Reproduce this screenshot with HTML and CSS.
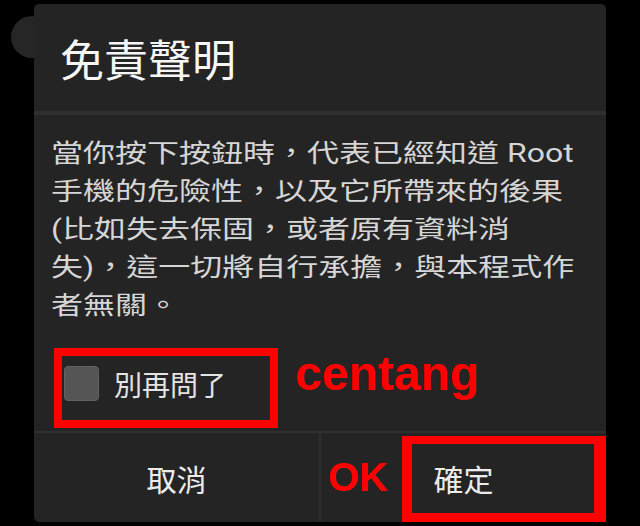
FILE: index.html
```html
<!DOCTYPE html>
<html lang="zh-Hant">
<head>
    <meta charset="UTF-8">
    <meta name="viewport" content="width=device-width, initial-scale=1.0">
    <title>免責聲明</title>
    <link rel="stylesheet" href="styles.css">
</head>
<body>
    <div class="screen">
        <div class="behind-dot"></div>

        <div class="dialog">
            <div class="dialog-title">免責聲明</div>
            <div class="title-rule"></div>

            <div class="dialog-body">
                <p class="message">當你按下按鈕時，代表已經知道 Root 手機的危險性，以及它所帶來的後果(比如失去保固，或者原有資料消失)，這一切將自行承擔，與本程式作者無關。</p>
            </div>

            <label class="check-row">
                <span class="check-box"></span>
                <span class="check-label">別再問了</span>
            </label>

            <div class="buttons">
                <button class="btn">取消</button>
                <button class="btn btn-ok">確定</button>
            </div>
        </div>

        <!-- annotations drawn on top of the screenshot -->
        <div class="mark mark-check"></div>
        <div class="mark mark-ok"></div>
        <span class="note note-check">centang</span>
        <span class="note note-ok">OK</span>
    </div>
</body>
</html>
```

FILE: styles.css
```css
body {
    margin: 0;
    background: #000;
    font-family: Roboto, "Noto Sans CJK TC", sans-serif;
}
.screen {
    position: relative;
    width: 640px;
    height: 526px;
    overflow: hidden;
    background: #000;
}
.behind-dot {
    position: absolute;
    left: 11px;
    top: 16px;
    width: 42px;
    height: 42px;
    border-radius: 50%;
    background: #262626;
}
.dialog {
    position: relative;
    margin: 4px 0 0 34px;
    width: 572px;
    height: 518px;
    background: #242424;
    border-radius: 5px;
    display: flex;
    flex-direction: column;
}
.dialog-title {
    height: 107px;
    padding-left: 26px;
    display: flex;
    align-items: center;
    color: #f6f6f6;
    font-family: "Noto Sans CJK TC", sans-serif;
    font-size: 44px;
}
.title-rule {
    height: 4px;
    background: #2f2f2f;
}
.dialog-body {
    padding: 20px 0 0 17px;
    height: 188px;
}
.message {
    margin: 0;
    width: 413px;
    color: #d6d6d6;
    font-size: 25px;
    line-height: 38px;
    transform: scaleX(1.28);
    transform-origin: left top;
}
.check-row {
    margin: 33px 0 0 30px;
    height: 55px;
    display: flex;
    align-items: center;
    gap: 15px;
}
.check-box {
    width: 33px;
    height: 33px;
    background: #555;
    border: 1px solid #626262;
    border-radius: 4px;
}
.check-label {
    color: #e4e4e4;
    font-family: "Noto Sans CJK TC", sans-serif;
    font-size: 28px;
}
.buttons {
    margin-top: auto;
    height: 89px;
    border-top: 2px solid #303030;
    display: flex;
}
.btn {
    flex: 1;
    background: none;
    border: none;
    padding: 0;
    color: #ececec;
    font-family: "Noto Sans CJK TC", sans-serif;
    font-size: 30px;
}
.btn-ok {
    border-left: 2px solid #2e2e2e;
}
.mark {
    position: absolute;
    box-sizing: border-box;
    border: 8px solid #ff0000;
}
.mark-check {
    left: 54px;
    top: 348px;
    width: 224px;
    height: 80px;
}
.mark-ok {
    left: 402px;
    top: 436px;
    width: 204px;
    height: 86px;
    border-width: 8px 12px 9px 10px;
}
.note {
    position: absolute;
    color: #ff0000;
    font-family: "Liberation Sans", Arial, sans-serif;
    font-weight: bold;
}
.note-check {
    left: 295px;
    top: 350px;
    font-size: 48px;
    line-height: 48px;
}
.note-ok {
    left: 328px;
    top: 457px;
    font-size: 40px;
    line-height: 40px;
}
```
